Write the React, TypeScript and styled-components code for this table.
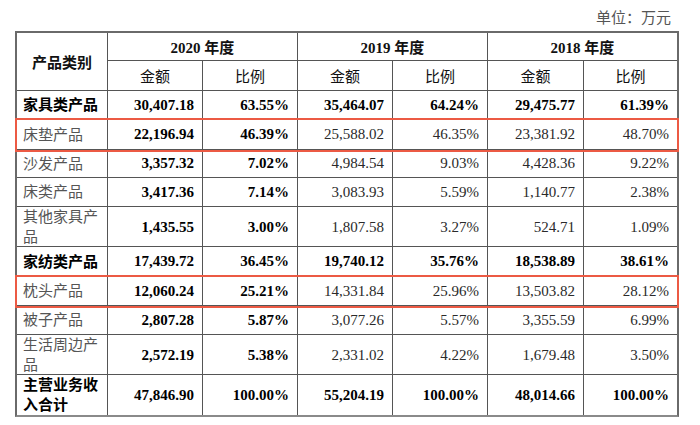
import styled, { createGlobalStyle } from "styled-components";

const GlobalStyle = createGlobalStyle`
    body {
        margin: 0;
        background: #ffffff;
        font-family: "Liberation Serif", "Noto Sans CJK SC", serif;
    }
`

const columns = "91px 95px 95px 95px 95px 96px 93px"

const StylePage = styled.div`
    width: 700px;
    height: 425px;
    box-sizing: border-box;
    padding: 8px 21px 0 15px;
`

const Unit = styled.p`
    margin: 0 0 3px;
    padding-right: 8px;
    text-align: right;
    font-size: 15px;
    line-height: 20px;
    color: #555;
`

const Table = styled.div`
    width: 664px;
    box-sizing: border-box;
    border: 2px solid #6a6a6a;
    border-bottom-color: #8a8a8a;
`

const Header = styled.div`
    display: grid;
    grid-template-columns: ${columns};
    grid-template-rows: 28px 29px;
    border-bottom: 1px solid #555;
`

const HeadCell = styled.div<{ $rows?: number; $cols?: number; $bold?: boolean; $last?: boolean }>`
    grid-row: span ${p => p.$rows ?? 1};
    grid-column: span ${p => p.$cols ?? 1};
    display: flex;
    align-items: center;
    justify-content: center;
    box-sizing: border-box;
    border-right: ${p => (p.$last ? "none" : "1px solid #555")};
    border-bottom: ${p => (p.$rows === 2 ? "none" : "1px solid #555")};
    font-size: 15px;
    font-weight: ${p => (p.$bold ? 700 : 400)};
    color: #111;
    &:nth-last-child(-n + 6) {
        border-bottom: none;
    }
`

const Row = styled.div<{ $h: number; $highlight?: boolean; $last?: boolean }>`
    display: grid;
    grid-template-columns: ${columns};
    height: ${p => p.$h}px;
    box-sizing: border-box;
    border-bottom: ${p => (p.$last ? "none" : "1px solid #555")};
    position: relative;
    z-index: ${p => (p.$highlight ? 1 : 0)};
    outline: ${p => (p.$highlight ? "2px solid #ec5a44" : "none")};
    outline-offset: 0;
`

const NameCell = styled.div<{ $bold?: boolean }>`
    display: flex;
    align-items: center;
    box-sizing: border-box;
    padding: 0 8px 0 6px;
    border-right: 1px solid #555;
    font-size: 15px;
    line-height: 20px;
    font-weight: ${p => (p.$bold ? 700 : 400)};
    color: ${p => (p.$bold ? "#000" : "#555")};
`

const NumCell = styled.div<{ $bold?: boolean; $last?: boolean }>`
    display: flex;
    align-items: center;
    justify-content: flex-end;
    box-sizing: border-box;
    padding-right: 8px;
    border-right: ${p => (p.$last ? "none" : "1px solid #555")};
    font-size: 15px;
    font-weight: ${p => (p.$bold ? 700 : 400)};
    color: ${p => (p.$bold ? "#000" : "#2a2a2a")};
`

type Item = {
    name: string
    values: string[]
    h: number
    strong?: boolean
    highlight?: boolean
}

const rows: Item[] = [
    { name: "家具类产品", strong: true, h: 29, values: ["30,407.18", "63.55%", "35,464.07", "64.24%", "29,475.77", "61.39%"] },
    { name: "床垫产品", highlight: true, h: 30, values: ["22,196.94", "46.39%", "25,588.02", "46.35%", "23,381.92", "48.70%"] },
    { name: "沙发产品", h: 28, values: ["3,357.32", "7.02%", "4,984.54", "9.03%", "4,428.36", "9.22%"] },
    { name: "床类产品", h: 29, values: ["3,417.36", "7.14%", "3,083.93", "5.59%", "1,140.77", "2.38%"] },
    { name: "其他家具产品", h: 40, values: ["1,435.55", "3.00%", "1,807.58", "3.27%", "524.71", "1.09%"] },
    { name: "家纺类产品", strong: true, h: 30, values: ["17,439.72", "36.45%", "19,740.12", "35.76%", "18,538.89", "38.61%"] },
    { name: "枕头产品", highlight: true, h: 29, values: ["12,060.24", "25.21%", "14,331.84", "25.96%", "13,503.82", "28.12%"] },
    { name: "被子产品", h: 29, values: ["2,807.28", "5.87%", "3,077.26", "5.57%", "3,355.59", "6.99%"] },
    { name: "生活周边产品", h: 40, values: ["2,572.19", "5.38%", "2,331.02", "4.22%", "1,679.48", "3.50%"] },
    { name: "主营业务收入合计", strong: true, h: 40, values: ["47,846.90", "100.00%", "55,204.19", "100.00%", "48,014.66", "100.00%"] },
]

const years = ["2020", "2019", "2018"]

export default function App() {
    return (
        <>
            <GlobalStyle />
            <StylePage>
                <Unit>单位：万元</Unit>
                <Table>
                    <Header>
                        <HeadCell $rows={2} $bold>产品类别</HeadCell>
                        {years.map((y, i) => (
                            <HeadCell key={y} $cols={2} $bold $last={i === years.length - 1}>
                                {y}&nbsp;年度
                            </HeadCell>
                        ))}
                        {years.map((y, i) => [
                            <HeadCell key={y + "a"}>金额</HeadCell>,
                            <HeadCell key={y + "b"} $last={i === years.length - 1}>比例</HeadCell>,
                        ])}
                    </Header>
                    {rows.map((r, ri) => (
                        <Row key={r.name} $h={r.h} $highlight={r.highlight} $last={ri === rows.length - 1}>
                            <NameCell $bold={r.strong}>{r.name}</NameCell>
                            {r.values.map((v, i) => (
                                <NumCell key={i} $bold={r.strong || i < 2} $last={i === r.values.length - 1}>
                                    {v}
                                </NumCell>
                            ))}
                        </Row>
                    ))}
                </Table>
            </StylePage>
        </>
    )
}
